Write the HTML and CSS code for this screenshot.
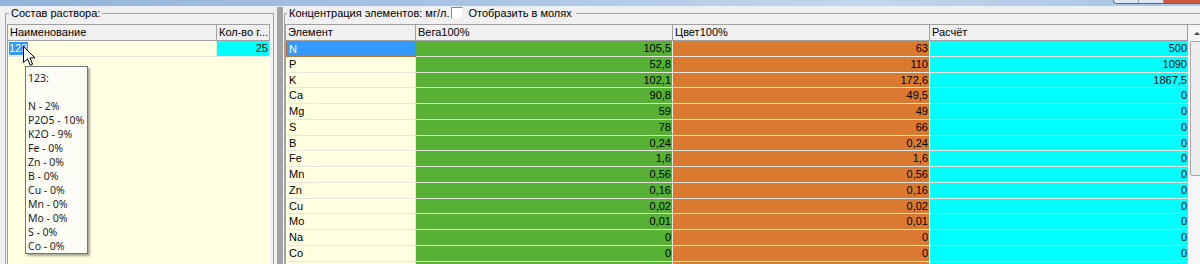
FILE: index.html
```html
<!DOCTYPE html>
<html lang="ru">
<head>
    <meta charset="UTF-8">
    <title>Концентрация элементов</title>
    <link rel="stylesheet" href="styles.css">
</head>
<body>
    <div class="titlebar">
        <div class="caption-buttons">
            <span class="cap-btn"></span>
            <span class="cap-btn"></span>
            <span class="cap-btn cap-close"></span>
        </div>
    </div>

    <div class="window">
        <div class="pane pane-left">
            <fieldset class="group group-left">
                <legend>Состав раствора:</legend>
                <div class="grid grid-mix">
                    <div class="grid-head">
                        <div class="hcell">Наименование</div>
                        <div class="hcell">Кол-во г...</div>
                    </div>
                    <div class="row">
                        <div class="cell"><span class="sel-text">123</span></div>
                        <div class="cell num cyan">25</div>
                    </div>
                </div>
            </fieldset>

            <div class="tooltip">
                <div>123:</div>
                <div>&nbsp;</div>
                <div>N - 2%</div>
                <div>P2O5 - 10%</div>
                <div>K2O - 9%</div>
                <div>Fe - 0%</div>
                <div>Zn - 0%</div>
                <div>B - 0%</div>
                <div>Cu - 0%</div>
                <div>Mn - 0%</div>
                <div>Mo - 0%</div>
                <div>S - 0%</div>
                <div>Co - 0%</div>
            </div>

            <svg class="cursor" width="13" height="21" viewBox="0 0 13 21">
                <path d="M0.5 0.5 L0.5 16.5 L4.5 12.8 L7.2 19.2 L9.6 18.2 L7 11.9 L12 11.9 Z" fill="#fff" stroke="#000" stroke-width="1" stroke-linejoin="miter"/>
            </svg>
        </div>

        <div class="splitter"></div>

        <div class="pane pane-right">
            <fieldset class="group group-right">
                <legend>Концентрация элементов: мг/л.<span class="checkbox"></span>Отобразить в молях</legend>
                <div class="grid-wrap">
                    <div class="grid grid-conc">
                        <div class="grid-head">
                            <div class="hcell">Элемент</div>
                            <div class="hcell">Вега100%</div>
                            <div class="hcell">Цвет100%</div>
                            <div class="hcell">Расчёт</div>
                        </div>
                        <div class="row">
                            <div class="cell name selected">N</div>
                            <div class="cell num green">105,5</div>
                            <div class="cell num orange">63</div>
                            <div class="cell num cyan">500</div>
                        </div>
                        <div class="row">
                            <div class="cell name">P</div>
                            <div class="cell num green">52,8</div>
                            <div class="cell num orange">110</div>
                            <div class="cell num cyan">1090</div>
                        </div>
                        <div class="row">
                            <div class="cell name">K</div>
                            <div class="cell num green">102,1</div>
                            <div class="cell num orange">172,6</div>
                            <div class="cell num cyan">1867,5</div>
                        </div>
                        <div class="row">
                            <div class="cell name">Ca</div>
                            <div class="cell num green">90,8</div>
                            <div class="cell num orange">49,5</div>
                            <div class="cell num cyan">0</div>
                        </div>
                        <div class="row">
                            <div class="cell name">Mg</div>
                            <div class="cell num green">59</div>
                            <div class="cell num orange">49</div>
                            <div class="cell num cyan">0</div>
                        </div>
                        <div class="row">
                            <div class="cell name">S</div>
                            <div class="cell num green">78</div>
                            <div class="cell num orange">66</div>
                            <div class="cell num cyan">0</div>
                        </div>
                        <div class="row">
                            <div class="cell name">B</div>
                            <div class="cell num green">0,24</div>
                            <div class="cell num orange">0,24</div>
                            <div class="cell num cyan">0</div>
                        </div>
                        <div class="row">
                            <div class="cell name">Fe</div>
                            <div class="cell num green">1,6</div>
                            <div class="cell num orange">1,6</div>
                            <div class="cell num cyan">0</div>
                        </div>
                        <div class="row">
                            <div class="cell name">Mn</div>
                            <div class="cell num green">0,56</div>
                            <div class="cell num orange">0,56</div>
                            <div class="cell num cyan">0</div>
                        </div>
                        <div class="row">
                            <div class="cell name">Zn</div>
                            <div class="cell num green">0,16</div>
                            <div class="cell num orange">0,16</div>
                            <div class="cell num cyan">0</div>
                        </div>
                        <div class="row">
                            <div class="cell name">Cu</div>
                            <div class="cell num green">0,02</div>
                            <div class="cell num orange">0,02</div>
                            <div class="cell num cyan">0</div>
                        </div>
                        <div class="row">
                            <div class="cell name">Mo</div>
                            <div class="cell num green">0,01</div>
                            <div class="cell num orange">0,01</div>
                            <div class="cell num cyan">0</div>
                        </div>
                        <div class="row">
                            <div class="cell name">Na</div>
                            <div class="cell num green">0</div>
                            <div class="cell num orange">0</div>
                            <div class="cell num cyan">0</div>
                        </div>
                        <div class="row">
                            <div class="cell name">Co</div>
                            <div class="cell num green">0</div>
                            <div class="cell num orange">0</div>
                            <div class="cell num cyan">0</div>
                        </div>
                        <div class="row">
                            <div class="cell name"></div>
                            <div class="cell num green"></div>
                            <div class="cell num orange"></div>
                            <div class="cell num cyan"></div>
                        </div>
                    </div>
                    <div class="vscroll">
                        <div class="vs-btn"><span class="vs-arrow"></span></div>
                        <div class="vs-thumb"></div>
                    </div>
                </div>
            </fieldset>
        </div>
    </div>
</body>
</html>
```

FILE: styles.css
```css
* {
    box-sizing: border-box;
}
html, body {
    margin: 0;
    height: 264px;
    overflow: hidden;
}
body {
    background-color: #f0f0f0;
    font-family: "Liberation Sans", Arial, sans-serif;
    font-size: 11px;
    color: #000;
}
.titlebar {
    height: 7px;
    background: linear-gradient(90deg, #94b3d8 0%, #aac5e4 40%, #c2d7ee 72%, #a7c2e2 100%);
    border-bottom: 1px solid #e9eff7;
    display: flex;
    justify-content: flex-end;
    overflow: hidden;
}
.caption-buttons {
    display: flex;
    width: 97px;
    height: 4px;
    margin-right: -10px;
    border: 1px solid #56687e;
    border-top: none;
    border-radius: 0 0 4px 4px;
    overflow: hidden;
}
.cap-btn {
    width: 25px;
    background: #dfe8f2;
    border-right: 1px solid #8a9bb0;
}
.cap-close {
    flex: 1;
    background: #c9583f;
    border-right: none;
}
.window {
    display: flex;
    height: 257px;
}
.pane-left {
    position: relative;
    flex: none;
    width: 277px;
    padding: 0 3px 0 5px;
}
.splitter {
    flex: none;
    width: 6px;
    background-color: #a3a3a3;
}
.pane-right {
    flex: 1;
    min-width: 0;
    padding-left: 1px;
}
.group {
    margin: 0;
    min-width: 0;
    height: 280px;
    border: 1px solid #a6a6a6;
}
.group legend {
    margin-left: 2px;
    padding: 0 2px;
    line-height: 12px;
    display: flex;
    align-items: center;
}
.group-left {
    padding: 5px 3px 0 1px;
}
.group-right {
    width: 940px;
    padding: 5px 0 0 0;
}
.group-right legend {
    padding-right: 4px;
}
.checkbox {
    display: inline-block;
    width: 12px;
    height: 12px;
    margin: 0 5px 0 2px;
    background: #fff;
    border-top: 1px solid #8a8a8a;
    border-left: 1px solid #8a8a8a;
    border-right: 1px solid #f4f4f4;
    border-bottom: 1px solid #f4f4f4;
}

/* string grids */
.grid {
    background-color: #ffffe1;
    border-left: 1px solid #a0a0a0;
}
.grid-mix {
    width: 263px;
    height: 250px;
    border-top: 1px solid #a0a0a0;
}
.grid-mix .grid-head,
.grid-mix .row {
    display: grid;
    grid-template-columns: 209px 53px;
}
.grid-head {
    height: 16px;
}
.hcell {
    background-color: #f0f0f0;
    border-right: 1px solid #a0a0a0;
    border-bottom: 1px solid #a0a0a0;
    padding-left: 2px;
    line-height: 15px;
    white-space: nowrap;
    overflow: hidden;
}
.row {
    height: 15.75px;
}
.cell {
    border-right: 1px solid #e6e6dc;
    border-bottom: 1px solid #e6e6dc;
    line-height: 14.75px;
    padding: 0 2px 0 2px;
    white-space: nowrap;
    overflow: hidden;
}
.cell.num {
    text-align: right;
    padding-right: 1px;
}
.sel-text {
    display: inline-block;
    background-color: #3399ff;
    color: #fff;
    line-height: 13px;
    padding: 0 1px 0 0;
    margin-left: -1px;
}
.grid-wrap {
    display: flex;
    border-top: 1px solid #a0a0a0;
}
.grid-conc .grid-head,
.grid-conc .row {
    display: grid;
    grid-template-columns: 130px 257px 257px 258px;
}
.grid-conc {
    width: 903px;
    height: 250px;
}
.name {
    padding-left: 3px;
}
.selected {
    background-color: #3399ff;
    color: #fff;
    border: 1px solid #b8763e;
    padding-left: 2px;
}
.green {
    background-color: #56b134;
}
.orange {
    background-color: #d97a30;
}
.cyan {
    background-color: #00ffff;
}
.grid-conc .cyan {
    border-right: none;
}
.vscroll {
    flex: none;
    width: 17px;
    background-color: #f6f6f6;
}
.vs-btn {
    height: 16px;
    display: flex;
    justify-content: center;
    align-items: center;
}
.vs-arrow {
    width: 0;
    height: 0;
    border-left: 3px solid transparent;
    border-right: 3px solid transparent;
    border-bottom: 3px solid #404040;
}
.vs-thumb {
    height: 135px;
    margin: 0 1px 0 2px;
    border: 1px solid #a8a8a8;
    border-radius: 2px;
    background-color: #ececec;
}

/* hint popup over the mix grid */
.tooltip {
    position: absolute;
    left: 25px;
    top: 59px;
    width: 63px;
    height: 188px;
    padding: 4px 0 0 2px;
    background-color: #fdfdf6;
    border: 1px solid #767676;
    box-shadow: 2px 2px 2px rgba(0, 0, 0, 0.35);
    font-family: "Noto Sans", "Open Sans", sans-serif;
    font-size: 10.5px;
    line-height: 14px;
    color: #1e1e1e;
    white-space: nowrap;
}
.cursor {
    position: absolute;
    left: 23px;
    top: 39px;
}
```
